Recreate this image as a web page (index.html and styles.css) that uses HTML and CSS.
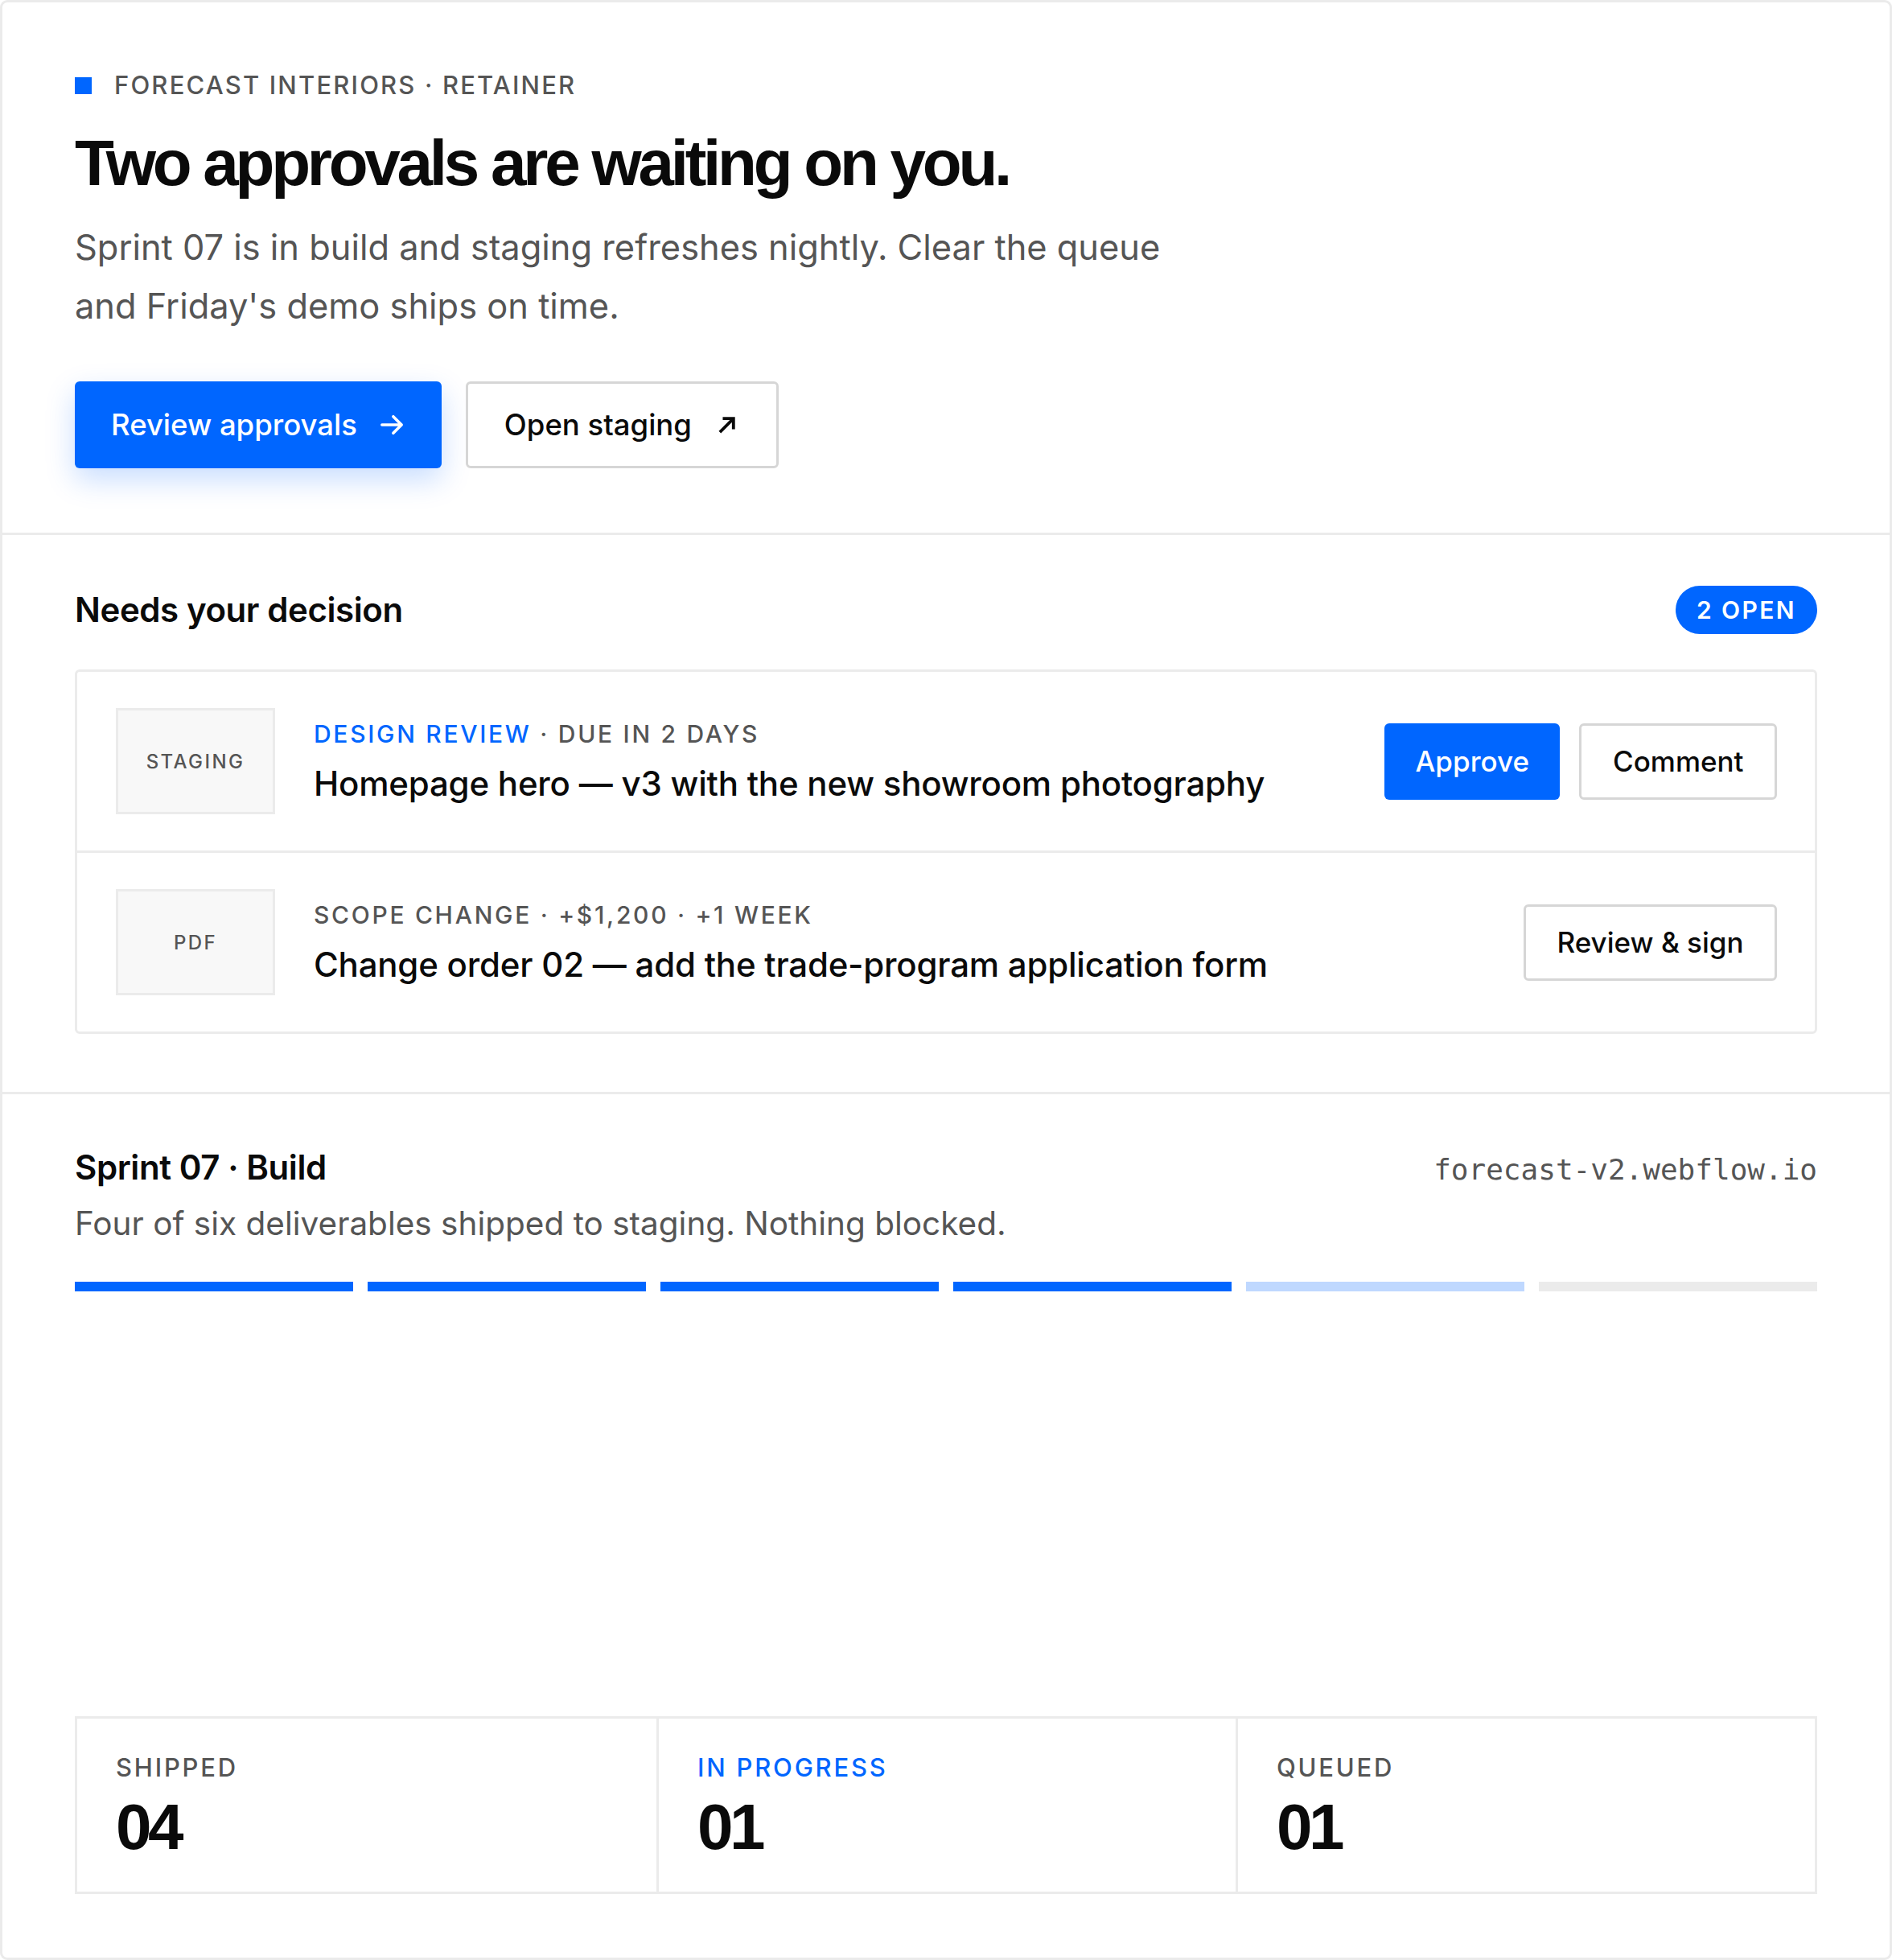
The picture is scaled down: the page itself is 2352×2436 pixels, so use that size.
FILE: index.html
```html
<!DOCTYPE html>
<html lang="en">
<head>
  <meta charset="UTF-8">
  <meta name="viewport" content="width=device-width, initial-scale=1.0">
  <title>Forecast Interiors · Retainer</title>
  <link rel="stylesheet" href="styles.css">
</head>
<body>
  <div class="page">
    <section class="hero">
      <div class="eyebrow"><span class="eyebrow-mark"></span>FORECAST INTERIORS · RETAINER</div>
      <h1>Two approvals are waiting on you.</h1>
      <p class="lede">Sprint 07 is in build and staging refreshes nightly. Clear the queue and Friday's demo ships on time.</p>
      <div class="actions">
        <a class="btn btn-primary" href="#queue">
          Review approvals
          <svg width="30" height="30" viewBox="0 0 16 16" fill="none" stroke="currentColor" stroke-width="1.9" stroke-linecap="round" stroke-linejoin="round"><path d="M1.5 8h13M9 2.5L14.5 8 9 13.5"/></svg>
        </a>
        <a class="btn btn-outline" href="#staging">
          Open staging
          <svg width="24" height="24" viewBox="0 0 20 20" fill="none" stroke="currentColor" stroke-width="3.2" stroke-linecap="square" stroke-linejoin="miter"><path d="M3.5 16.5L15.5 4.5M7 3.5h9.5V13"/></svg>
        </a>
      </div>
    </section>

    <section class="decisions" id="queue">
      <div class="section-head">
        <h2>Needs your decision</h2>
        <span class="pill">2 OPEN</span>
      </div>
      <div class="queue">
        <div class="queue-row">
          <div class="thumb">STAGING</div>
          <div class="queue-body">
            <div class="meta"><span class="meta-type">DESIGN REVIEW</span> · DUE IN 2 DAYS</div>
            <div class="queue-title">Homepage hero — v3 with the new showroom photography</div>
          </div>
          <div class="queue-actions">
            <button class="btn-sm btn-primary">Approve</button>
            <button class="btn-sm btn-outline">Comment</button>
          </div>
        </div>
        <div class="queue-row">
          <div class="thumb">PDF</div>
          <div class="queue-body">
            <div class="meta">SCOPE CHANGE · +$1,200 · +1 WEEK</div>
            <div class="queue-title">Change order 02 — add the trade-program application form</div>
          </div>
          <div class="queue-actions">
            <button class="btn-sm btn-outline">Review &amp; sign</button>
          </div>
        </div>
      </div>
    </section>

    <section class="sprint" id="staging">
      <div class="section-head sprint-head">
        <h2>Sprint 07 · Build</h2>
        <span class="url">forecast-v2.webflow.io</span>
      </div>
      <p class="sprint-sub">Four of six deliverables shipped to staging. Nothing blocked.</p>
      <div class="progress">
        <span class="seg done"></span>
        <span class="seg done"></span>
        <span class="seg done"></span>
        <span class="seg done"></span>
        <span class="seg active"></span>
        <span class="seg"></span>
      </div>
      <div class="stats">
        <div class="stat">
          <div class="stat-label">SHIPPED</div>
          <div class="stat-value">04</div>
        </div>
        <div class="stat">
          <div class="stat-label stat-label-active">IN PROGRESS</div>
          <div class="stat-value">01</div>
        </div>
        <div class="stat">
          <div class="stat-label">QUEUED</div>
          <div class="stat-value">01</div>
        </div>
      </div>
    </section>
  </div>
</body>
</html>
```

FILE: styles.css
```css
* {
  box-sizing: border-box;
}
html, body {
  height: 100%;
}
body {
  margin: 0;
  font-family: 'Inter', 'Noto Sans', sans-serif;
  color: #0a0a0a;
  background: #fff;
}
.page {
  height: 100vh;
  display: flex;
  flex-direction: column;
  border: 3px solid #ebebeb;
  border-radius: 9px;
  overflow: hidden;
}

/* hero */
.hero {
  padding: 81px 90px 80px;
  border-bottom: 3px solid #ebebeb;
}
.eyebrow {
  display: flex;
  align-items: center;
  gap: 28px;
  font-size: 31px;
  line-height: 44px;
  font-weight: 500;
  letter-spacing: 0.07em;
  color: #555;
}
.eyebrow-mark {
  width: 21px;
  height: 21px;
  background: #0066ff;
}
.hero h1 {
  margin: 32px 0 0;
  font-family: 'Liberation Sans', Arial, sans-serif;
  font-size: 80px;
  line-height: 86px;
  font-weight: 700;
  letter-spacing: -0.053em;
}
.lede {
  margin: 25px 0 0;
  max-width: 1400px;
  font-size: 43.4px;
  line-height: 73px;
  color: #555;
}
.actions {
  display: flex;
  gap: 30px;
  margin-top: 57px;
}
.btn {
  display: inline-flex;
  align-items: center;
  gap: 28px;
  height: 108px;
  padding: 0 47px 0 45px;
  border-radius: 6px;
  font-size: 36.5px;
  font-weight: 500;
  text-decoration: none;
}
.btn-primary {
  background: #0066ff;
  color: #fff;
  border: none;
}
.hero .btn-primary {
  box-shadow: 0 14px 36px rgba(0, 102, 255, 0.22);
}
.btn-outline {
  background: #fff;
  color: #0a0a0a;
  border: 3px solid #d6d6d6;
}
.hero .btn-outline {
  gap: 32px;
  padding: 0 49px 0 45px;
}

/* decisions */
.decisions {
  padding: 63px 90px 72px;
  border-bottom: 3px solid #ebebeb;
}
.section-head {
  display: flex;
  justify-content: space-between;
  align-items: center;
}
.section-head h2 {
  margin: 0;
  font-size: 42px;
  line-height: 54px;
  font-weight: 600;
  letter-spacing: -0.01em;
}
.pill {
  height: 60px;
  display: inline-flex;
  align-items: center;
  padding: 0 26px;
  border-radius: 30px;
  background: #0066ff;
  color: #fff;
  font-size: 30px;
  font-weight: 600;
  letter-spacing: 0.08em;
}
.queue {
  margin-top: 44px;
  border: 3px solid #ebebeb;
  border-radius: 6px;
}
.queue-row {
  display: flex;
  align-items: center;
  gap: 48px;
  padding: 45px 47px 45px 48px;
}
.queue-row + .queue-row {
  border-top: 3px solid #ebebeb;
}
.thumb {
  flex: none;
  width: 198px;
  height: 132px;
  display: flex;
  align-items: center;
  justify-content: center;
  background: #f8f8f8;
  border: 3px solid #ebebeb;
  font-size: 24px;
  font-weight: 500;
  letter-spacing: 0.1em;
  color: #555;
}
.queue-body {
  flex: 1;
}
.meta {
  font-size: 30px;
  line-height: 42px;
  font-weight: 500;
  letter-spacing: 0.09em;
  color: #555;
}
.meta-type {
  color: #0066ff;
}
.queue-title {
  margin-top: 12px;
  font-size: 42px;
  line-height: 57px;
  font-weight: 500;
  letter-spacing: -0.005em;
}
.queue-actions {
  display: flex;
  gap: 24px;
}
.btn-sm {
  height: 95px;
  padding: 0 38.5px;
  border-radius: 6px;
  font-family: inherit;
  font-size: 35px;
  font-weight: 500;
  cursor: pointer;
}

/* sprint */
.sprint {
  flex: 1;
  display: flex;
  flex-direction: column;
  padding: 64px 90px 79px;
}
.sprint-head {
  align-items: baseline;
}
.url {
  font-family: 'DejaVu Sans Mono', monospace;
  font-size: 36px;
  color: #555;
}
.sprint-sub {
  margin: 13px 0 0;
  font-size: 40.5px;
  line-height: 60px;
  color: #555;
}
.progress {
  display: flex;
  gap: 18px;
  margin-top: 42px;
}
.seg {
  flex: 1;
  height: 12px;
  background: #ebebeb;
}
.seg.done {
  background: #0066ff;
}
.seg.active {
  background: #bfd8ff;
}
.stats {
  margin-top: auto;
  display: grid;
  grid-template-columns: repeat(3, 1fr);
  border: 3px solid #ebebeb;
}
.stat {
  padding: 40px 48px 37px;
}
.stat + .stat {
  border-left: 3px solid #ebebeb;
}
.stat-label {
  font-size: 31px;
  line-height: 42px;
  font-weight: 500;
  letter-spacing: 0.09em;
  color: #555;
}
.stat-label-active {
  color: #0066ff;
}
.stat-value {
  margin-top: 10px;
  font-family: 'Liberation Sans', Arial, sans-serif;
  font-size: 80px;
  line-height: 86px;
  font-weight: 700;
  letter-spacing: -0.055em;
}
```
